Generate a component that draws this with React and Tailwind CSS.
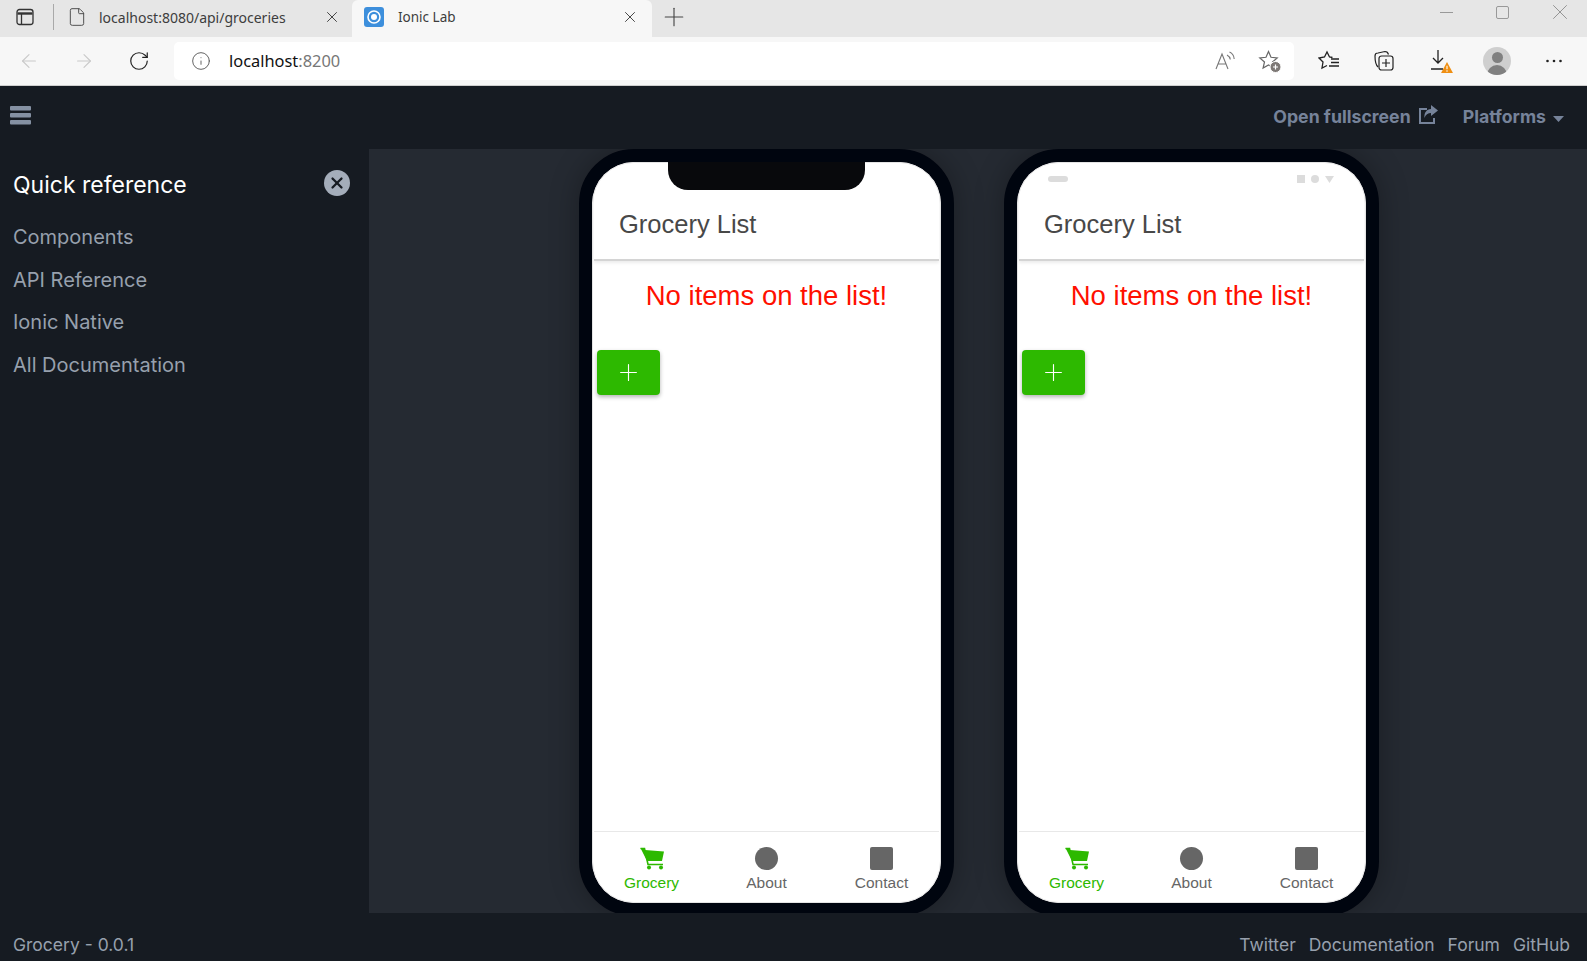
import React from 'react';
import { ArrowLeft, ArrowRight, File, Info, Plus, RotateCw, X } from 'lucide-react';

const sans = 'font-["Inter",sans-serif]';
const arial = 'font-["Liberation_Sans",Arial,sans-serif]';
const segoe = 'font-["Noto_Sans",sans-serif]';

const Tab = ({ active, icon, label }) => (
  <div className={`flex h-[37px] items-center pb-[3px] ${active ? 'w-[300px] rounded-t-md bg-[#f7f7f7] pl-[12px] pr-[13px]' : 'w-[298px] pl-[14px] pr-[11px]'}`}>
    {icon}
    <span className={`${segoe} flex-1 ${active ? 'ml-[14px] text-[13.5px]' : 'ml-[12px] text-[14px]'} text-[#3d3d3d]`}>{label}</span>
    <X className="h-[18px] w-[18px] text-[#333]" strokeWidth={1.2} />
  </div>
);

const BrowserChrome = () => (
  <div className="shrink-0">
    <div className="flex h-[37px] items-center bg-[#e6e6e6]">
      <div className="flex w-[54px] items-center justify-between pb-[3px] pl-[16px]">
        <svg width="18" height="18" viewBox="0 0 18 18" fill="none" stroke="#333" strokeWidth="1.3">
          <rect x="1" y="1.5" width="16" height="15" rx="2.5" />
          <path d="M1.5 5.5h15" strokeWidth="2.4" />
          <path d="M5.5 6v10" />
        </svg>
        <div className="h-[26px] w-px bg-[#a9a9a9]" />
      </div>
      <Tab icon={<File className="ml-[-1px] h-[20px] w-[20px] text-[#444]" strokeWidth={1.1} />} label="localhost:8080/api/groceries" />
      <Tab
        active
        icon={
          <svg width="20" height="20" viewBox="0 0 20 20">
            <rect width="20" height="20" rx="3" fill="#3d8fdc" />
            <circle cx="10" cy="10" r="6" fill="none" stroke="#fff" strokeWidth="1.6" />
            <circle cx="10" cy="10" r="3" fill="#fff" />
          </svg>
        }
        label="Ionic Lab"
      />
      <Plus className="mb-[3px] ml-[7px] h-[30px] w-[30px] text-[#444]" strokeWidth={0.9} />
      <div className="mb-[13px] ml-auto flex items-center pr-[14px]">
        <div className="mr-[43px] h-px w-[13px] bg-[#999]" />
        <div className="mr-[38px] h-[13px] w-[13px] rounded-[2px] border border-[#999]" />
        <X className="h-[26px] w-[26px] text-[#888]" strokeWidth={0.8} />
      </div>
    </div>
    <div className="flex h-[49px] items-center border-b border-[#cfcfcf] bg-[#f7f7f7]">
      <div className="flex w-[174px] items-center pl-[18px]">
        <ArrowLeft className="h-[22px] w-[22px] text-[#c9c9c9]" strokeWidth={1.2} />
        <ArrowRight className="ml-[33px] h-[22px] w-[22px] text-[#c9c9c9]" strokeWidth={1.2} />
        <RotateCw className="ml-[33px] h-[22px] w-[22px] text-[#222]" strokeWidth={1.3} />
      </div>
      <div className="flex h-[38px] w-[1120px] items-center rounded-[5px] bg-white pl-[17px] pr-[12px]">
        <Info className="h-[20px] w-[20px] text-[#555]" strokeWidth={1.1} />
        <span className={`${segoe} ml-[18px] text-[16.4px] text-[#111]`}>
          localhost<span className="text-[#777]">:8200</span>
        </span>
        <svg className="ml-auto" width="22" height="22" viewBox="0 0 22 22" fill="none" stroke="#777" strokeWidth="1.1">
          <path d="M2 19 8 4l6 15M4.2 14h7.6" />
          <path d="M13 5c2 1 3 2.500 3.300 4.500M15.500 2c3 1.300 4.500 4 4.700 7" />
        </svg>
        <svg className="ml-[22px]" width="24" height="24" viewBox="0 0 24 24" fill="none" stroke="#666" strokeWidth="1.2">
          <path d="M10.500 2.500 13 8.300l6.200.600-4.700 4.100 1.400 6.100-5.400-3.200-5.400 3.200 1.400-6.100L1.800 8.900 8 8.300z" />
          <circle cx="17.500" cy="18" r="5.500" fill="#7d7875" stroke="#fff" strokeWidth="1" />
          <path d="M17.500 15.500v5M15 18h5" stroke="#fff" />
        </svg>
      </div>
      <div className="flex flex-1 items-center pl-[24px] pr-[25px]">
        <svg width="22" height="22" viewBox="0 0 22 22" fill="none" stroke="#222" strokeWidth="1.3">
          <path d="M14.500 7.500 11.500 7 9 2 6.500 7 1 8l4 4-1 6 5-2.500" />
          <path d="M13 9h8M13 12.500h8M11 16h10" />
        </svg>
        <svg className="ml-[33px]" width="22" height="22" viewBox="0 0 22 22" fill="none" stroke="#222" strokeWidth="1.2">
          <path d="M5 17C3 15 2 9 2 6c0-2 1-3 3-3l7-1.500c2 0 3 1 3.500 3" />
          <rect x="6" y="6" width="14" height="14" rx="2.500" />
          <path d="M13 9v8M9 13h8" />
        </svg>
        <div className="relative ml-[34px] h-[24px] w-[24px]">
          <svg width="22" height="22" viewBox="0 0 22 22" fill="none" stroke="#222" strokeWidth="1.3">
            <path d="M9 1v13M4 9l5 5 5-5M2 20h12" />
          </svg>
          <svg className="absolute bottom-0 right-0" width="12" height="11" viewBox="0 0 13 12">
            <path d="M6.500 0 13 12H0z" fill="#ef8f13" />
            <path d="M6.500 4v4M6.500 9v1.500" stroke="#fff" strokeWidth="1.200" />
          </svg>
        </div>
        <div className="relative ml-[30px] h-[28px] w-[28px] overflow-hidden rounded-full bg-[#cfcfcf]">
          <div className="mx-auto mt-[5px] h-[11px] w-[11px] rounded-full bg-[#808080]" />
          <div className="mx-auto mt-[2px] h-[12px] w-[20px] rounded-t-full bg-[#808080]" />
        </div>
        <svg className="ml-auto" width="16" height="4" viewBox="0 0 16 4" fill="#222">
          <circle cx="1.500" cy="2" r="1.300" />
          <circle cx="8" cy="2" r="1.300" />
          <circle cx="14.500" cy="2" r="1.300" />
        </svg>
      </div>
    </div>
  </div>
);

const LabHeader = () => (
  <header className={`${sans} flex h-[63px] shrink-0 items-center bg-[#161b22] pl-[10px] pr-[23px] text-[#76839a]`}>
    <svg className="mt-[-4px]" width="21" height="19" viewBox="0 0 21 19" fill="#8591a3">
      <rect y="0" width="21" height="4.500" rx="1" />
      <rect y="7" width="21" height="4.500" rx="1" />
      <rect y="14" width="21" height="4.500" rx="1" />
    </svg>
    <div className="ml-auto flex items-center text-[17.700px] font-bold">
      <span>Open fullscreen</span>
      <svg className="ml-[7px] mt-[-4px]" width="20" height="20" viewBox="0 0 20 20" fill="currentColor">
        <path d="M9 4H2v14h14v-5" fill="none" stroke="currentColor" strokeWidth="2" />
        <path d="M13 0l7 5.500-7 5.500V8C10 8 7.500 9.500 6.500 13c-.5-5.500 2-8.500 6.500-9z" />
      </svg>
      <span className="ml-[25px]">Platforms</span>
      <svg className="ml-[7px] mt-[3px]" width="11" height="6" viewBox="0 0 11 6" fill="currentColor">
        <path d="M0 0h11L5.500 6z" />
      </svg>
    </div>
  </header>
);

const Sidebar = () => (
  <aside className={`${sans} w-[369px] shrink-0 bg-[#161b22] pl-[13px] pr-[19px] pt-[20px]`}>
    <div className="flex h-[32px] items-center justify-between">
      <h2 className="text-[23px] text-white">Quick reference</h2>
      <div className="mt-[-4px] flex h-[26px] w-[26px] items-center justify-center rounded-full bg-[#a4adba]">
        <X className="h-[18px] w-[18px] text-[#161b22]" strokeWidth={3} />
      </div>
    </div>
    <nav className="mt-[24px] flex flex-col gap-[18px] text-[20px] leading-[24.500px] text-[#97a0ad]">
      <a>Components</a>
      <a>API Reference</a>
      <a>Ionic Native</a>
      <a>All Documentation</a>
    </nav>
  </aside>
);

const TabItem = ({ icon, label, active }) => (
  <div className={`flex w-[115px] flex-col items-center ${active ? 'text-[#2db900]' : 'text-[#666]'}`}>
    <div className="flex h-[24px] items-center justify-center">{icon}</div>
    <span className="mt-[3px] text-[15.500px] leading-[20px]">{label}</span>
  </div>
);

const CartIcon = () => (
  <svg width="24" height="23" viewBox="0 0 24 23" fill="currentColor">
    <path d="M0.500 1h3.500l1 2 19 1.500-2 9.500H7z" />
    <path d="M0.500 1.500h4L8 17.500h15" fill="none" stroke="currentColor" strokeWidth="1.600" />
    <circle cx="9" cy="20.500" r="2" />
    <circle cx="21" cy="20.500" r="2" />
  </svg>
);

const Phone = ({ ios }) => (
  <div className="h-[767px] w-[375px] shrink-0 rounded-[55px] border-[13px] border-[#00050f] bg-[#00050f] shadow-[0_0_30px_rgba(0,0,0,0.3)]">
    <div className={`${arial} relative flex h-[741px] flex-col overflow-hidden rounded-[42px] bg-white`}>
      <div className="pointer-events-none absolute inset-0 rounded-[42px] border border-[#e4e4e4]" />
      {ios ? (
        <div className="absolute left-[76px] top-0 h-[28px] w-[197px] rounded-b-[20px] bg-[#08090c]" />
      ) : (
        <div className="absolute left-[31px] right-[32px] top-[13px] flex items-center justify-between">
          <div className="h-[6px] w-[20px] rounded-full bg-[#dcdcdc]" />
          <div className="flex items-center gap-[6px]">
            <div className="h-[8px] w-[8px] bg-[#dcdcdc]" />
            <div className="h-[8px] w-[8px] rounded-full bg-[#dcdcdc]" />
            <svg width="9" height="7" viewBox="0 0 9 7" fill="#dcdcdc">
              <path d="M0 0h9L4.500 7z" />
            </svg>
          </div>
        </div>
      )}
      <div className="mx-[2px] flex h-[99px] shrink-0 items-end border-b-2 border-[#d4d4d4] pb-[20px] pl-[25px] text-[25.500px] leading-[30px] text-[#484848] shadow-[0_2px_3px_rgba(0,0,0,0.08)]">
        Grocery List
      </div>
      <div className="flex flex-1 flex-col">
        <p className="mt-[18px] text-center text-[27.500px] leading-[34px] text-[#ff1000]">No items on the list!</p>
        <button className="ml-[5px] mt-[37px] flex h-[45px] w-[63px] items-center justify-center rounded-[4px] bg-[#2db900] text-white shadow-[0_2px_4px_rgba(0,0,0,0.3)]">
          <Plus className="h-[27px] w-[27px]" strokeWidth={1} />
        </button>
      </div>
      <div className="mx-[2px] flex h-[72px] shrink-0 justify-center border-t border-[#e8e8e8] pt-[14px]">
        <TabItem active label="Grocery" icon={<CartIcon />} />
        <TabItem label="About" icon={<div className="h-[23px] w-[23px] rounded-full bg-[#666]" />} />
        <TabItem label="Contact" icon={<div className="h-[23px] w-[23px] rounded-[2px] bg-[#666]" />} />
      </div>
    </div>
  </div>
);

const Footer = () => (
  <footer className={`${sans} flex h-[48px] shrink-0 items-center justify-between bg-[#161b22] pl-[13px] pr-[17px] pt-[16px] text-[17.500px] text-[#97a0ad]`}>
    <span>Grocery - 0.0.1</span>
    <div className="flex gap-[13px]">
      <a>Twitter</a>
      <a>Documentation</a>
      <a>Forum</a>
      <a>GitHub</a>
    </div>
  </footer>
);

export default function App() {
  return (
    <div className="flex h-screen w-full flex-col overflow-hidden bg-[#161b22]">
      <BrowserChrome />
      <LabHeader />
      <div className="flex min-h-0 flex-1">
        <Sidebar />
        <main className="flex flex-1 justify-center gap-[50px] overflow-hidden bg-[#252a32] pl-[2px]">
          <Phone ios />
          <Phone />
        </main>
      </div>
      <Footer />
    </div>
  );
}
